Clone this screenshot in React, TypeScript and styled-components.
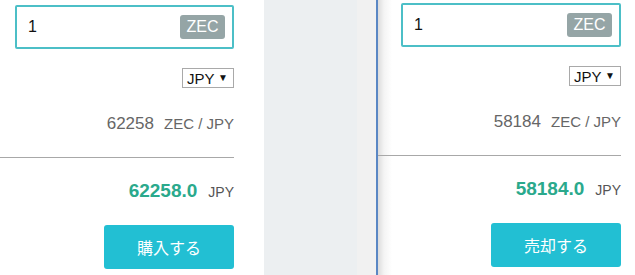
import React from 'react'
import styled, { createGlobalStyle } from 'styled-components'

const GlobalStyle = createGlobalStyle`
    html, body {
        margin: 0;
        padding: 0;
        background: #ffffff;
        font-family: 'Liberation Sans', Arial, 'Noto Sans CJK JP', sans-serif;
    }
`

const Page = styled.div`
    display: flex;
    width: 635px;
    height: 275px;
    overflow: hidden;
`

const Panel = styled.div<{ $top: number; $left: number; $right: number; $edge?: boolean }>`
    display: flex;
    flex-direction: column;
    align-items: flex-end;
    box-sizing: border-box;
    padding: ${(p) => p.$top}px ${(p) => p.$right}px 0 0;
    background: ${(p) => (p.$edge ? 'linear-gradient(to right, #dcdcdc 0px, #f4f4f4 6px, #ffffff 14px)' : '#ffffff')};
    border-left: ${(p) => (p.$edge ? '2px solid #5a87c4' : 'none')};
    flex: ${(p) => (p.$edge ? '1' : '0 0 264px')};

    & > .amount {
        margin-left: ${(p) => p.$left}px;
    }
`

const Gutter = styled.div`
    display: flex;
    flex: 0 0 112px;
`

const GutterPart = styled.div<{ $w: number; $bg: string }>`
    width: ${(p) => p.$w}px;
    background: ${(p) => p.$bg};
`

const AmountBox = styled.div`
    align-self: stretch;
    display: flex;
    align-items: center;
    justify-content: space-between;
    box-sizing: border-box;
    height: 44px;
    padding: 0 7px 0 11px;
    border: 2px solid #4cbfc7;
    border-radius: 2px;
    font-size: 16px;
    color: #111111;
`

const Unit = styled.span`
    display: inline-flex;
    align-items: center;
    justify-content: center;
    width: 45px;
    height: 24px;
    border-radius: 3px;
    background: #95a5a6;
    color: #ffffff;
    font-size: 16px;
`

const CurrencySelect = styled.div`
    display: flex;
    align-items: center;
    justify-content: space-between;
    box-sizing: border-box;
    width: 52px;
    height: 20px;
    margin-top: 19px;
    padding: 0 5px 0 4px;
    border: 1px solid #a9a9a9;
    font-size: 15px;
    color: #111111;
`

const Arrow = styled.span`
    font-size: 10px;
    line-height: 1;
`

const Rate = styled.div`
    margin-top: 26px;
    height: 20px;
    line-height: 20px;
    color: #666666;
    font-size: 17px;

    span {
        margin-left: 10px;
        font-size: 15px;
    }
`

const Divider = styled.hr`
    align-self: stretch;
    margin: 23px 0 0 0;
    border: 0;
    border-top: 1px solid #a8a8a8;
`

const Total = styled.div`
    margin-top: 22px;
    height: 22px;
    line-height: 22px;
    display: flex;
    align-items: baseline;
`

const TotalValue = styled.span`
    color: #2aa98c;
    font-size: 19px;
    font-weight: 700;
`

const TotalUnit = styled.span`
    margin-left: 11px;
    color: #555555;
    font-size: 14px;
`

const ActionButton = styled.button`
    margin-top: 23px;
    width: 130px;
    height: 44px;
    border: 0;
    border-radius: 3px;
    background: #22bfd3;
    color: #ffffff;
    font-family: 'Noto Sans CJK JP', sans-serif;
    font-size: 16px;
`

interface TradeProps {
    rate: number
    label: string
    top: number
    left: number
    right: number
    edge?: boolean
}

const TradePanel = ({ rate, label, top, left, right, edge }: TradeProps): JSX.Element => (
    <Panel $top={top} $left={left} $right={right} $edge={edge}>
        <AmountBox className="amount">
            <span>1</span>
            <Unit>ZEC</Unit>
        </AmountBox>
        <CurrencySelect>
            <span>JPY</span>
            <Arrow>▼</Arrow>
        </CurrencySelect>
        <Rate>
            {rate}
            <span>ZEC / JPY</span>
        </Rate>
        <Divider />
        <Total>
            <TotalValue>{rate.toFixed(1)}</TotalValue>
            <TotalUnit>JPY</TotalUnit>
        </Total>
        <ActionButton>{label}</ActionButton>
    </Panel>
)

export default function App(): JSX.Element {
    return (
        <>
            <GlobalStyle />
            <Page>
                <TradePanel rate={62258} label="購入する" top={5} left={15} right={30} />
                <Gutter>
                    <GutterPart $w={93} $bg="#eceff1" />
                    <GutterPart $w={19} $bg="#f1f1f1" />
                </Gutter>
                <TradePanel rate={58184} label="売却する" top={3} left={23} right={14} edge />
            </Page>
        </>
    )
}
